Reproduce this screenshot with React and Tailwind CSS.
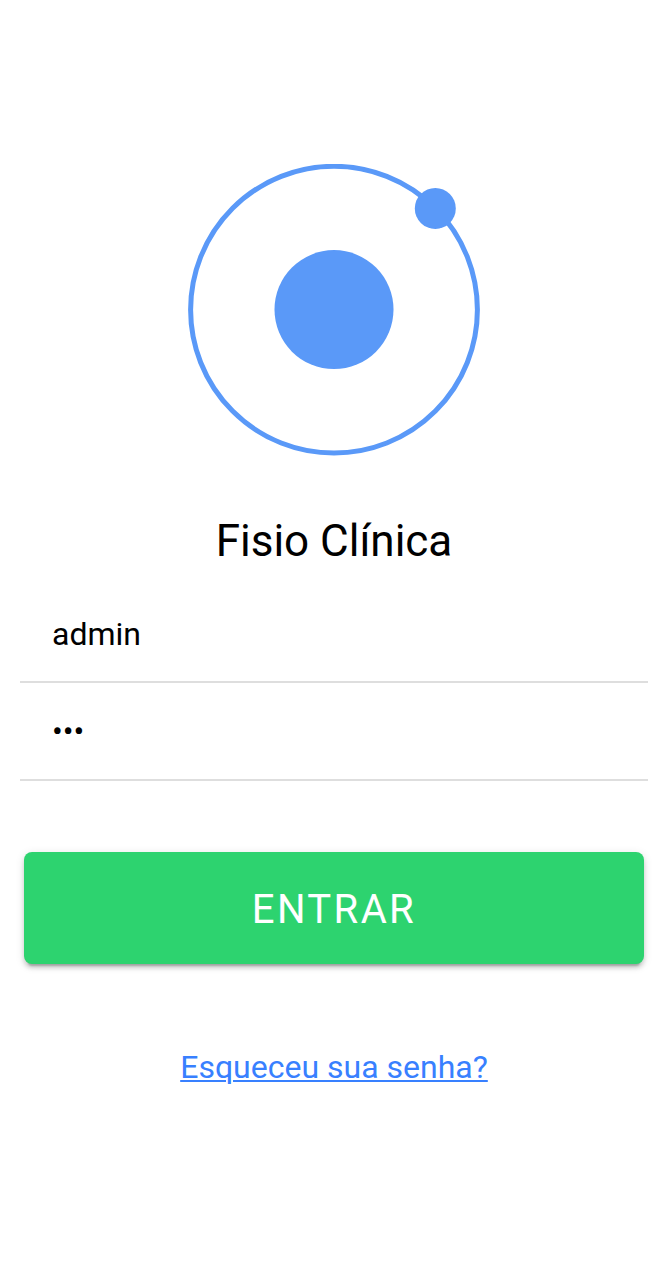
export default function App() {
  return (
    <main className="flex h-[1272px] w-full flex-col items-center overflow-hidden bg-white px-5 pt-[164px] font-[Roboto,sans-serif] text-black">
      <svg className="size-[292px] shrink-0" viewBox="0 0 292 292" fill="none" aria-hidden="true">
        <circle cx="146" cy="145.7" r="143.4" stroke="#5a99f8" strokeWidth="5" />
        <circle cx="146" cy="145.6" r="59.5" fill="#5a99f8" />
        <circle cx="247.3" cy="44.4" r="20.5" fill="#5a99f8" />
      </svg>
      <h1 className="mt-[59px] text-[44px] leading-[52px]">Fisio Clínica</h1>
      <form className="flex w-full flex-col" onSubmit={(e) => e.preventDefault()}>
        <input
          className="mt-[18px] h-[98px] w-full border-b-2 border-[#dedede] px-8 pt-0.5 text-[32px] outline-none"
          defaultValue="admin"
        />
        <input
          type="password"
          className="h-[98px] w-full border-b-2 border-[#dedede] px-8 text-[32px] outline-none"
          defaultValue="123"
        />
        <button className="mx-1 mt-[71px] h-28 rounded-lg bg-[#2dd36f] pt-1 text-[40px] tracking-[2.4px] text-white shadow-[0_6px_2px_-4px_rgba(0,0,0,0.2),0_4px_4px_0_rgba(0,0,0,0.14),0_2px_10px_0_rgba(0,0,0,0.12)]">
          ENTRAR
        </button>
      </form>
      <a href="#" className="mt-[84px] text-[32px] leading-[38px] text-[#3880ff] underline decoration-2 underline-offset-[2px]">
        Esqueceu sua senha?
      </a>
    </main>
  );
}
